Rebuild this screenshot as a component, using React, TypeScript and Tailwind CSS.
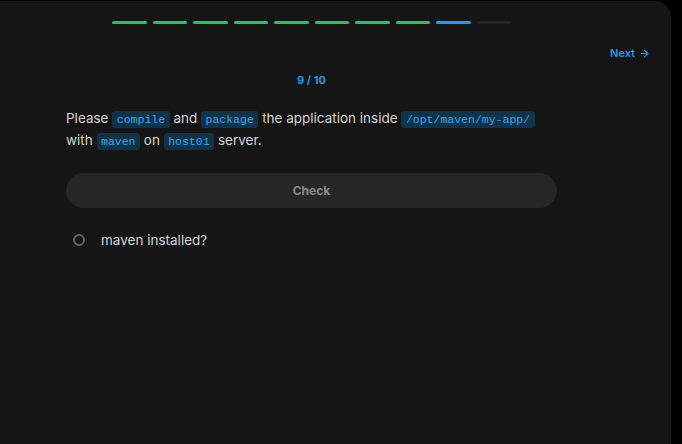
import React from "react";

const Code = ({ children }: { children: React.ReactNode }) => (
  <code className="rounded-[3px] bg-[#0f3349] px-[4.5px] py-[2px] text-[11.5px] leading-[14px] text-[#3ea6f0] [font-family:'Liberation_Mono',monospace]">
    {children}
  </code>
);

export default function App() {
  const bars = ["g", "g", "g", "g", "g", "g", "g", "g", "b", "x"];
  return (
    <div className="h-[444px] w-[682px] overflow-hidden bg-black [font-family:Inter,'Noto_Sans',sans-serif]">
      <div className="mt-px flex h-[443px] w-[671px] flex-col rounded-tr-[16px] bg-[#151515]">
        <div className="flex w-[623px] justify-center gap-[6px] pt-[20px]">
          {bars.map((b, i) => (
            <div
              key={i}
              className={
                "h-[3px] w-[34.5px] rounded-full " +
                (b === "g" ? "bg-[#22c55e]" : b === "b" ? "bg-[#1d9bf0]" : "bg-[#262626]")
              }
            />
          ))}
        </div>
        <div className="flex justify-end pr-[21px] pt-[21px]">
          <button className="flex items-center gap-[4px] text-[11px] font-semibold text-[#1d9bf0]">
            Next
            <svg width="11" height="11" viewBox="0 0 24 24" fill="none" stroke="currentColor" strokeWidth="2.6" strokeLinecap="round" strokeLinejoin="round">
              <path d="M5 12h14" />
              <path d="m12 5 7 7-7 7" />
            </svg>
          </button>
        </div>
        <div className="ml-[66px] w-[491px]">
          <div className="pt-[10px] text-center text-[11px] font-bold text-[#1d9bf0]">9 / 10</div>
          <p className="mt-[19px] text-[13.5px] leading-[22px] text-[#d4d4d4]">
            Please <Code>compile</Code> and <Code>package</Code> the application inside{" "}
            <Code>/opt/maven/my-app/</Code> with <Code>maven</Code> on <Code>host01</Code> server.
          </p>
          <button className="mt-[22px] flex h-[35px] w-full items-center justify-center rounded-full bg-[#262626] text-[12px] font-bold text-[#8a8a8a]">
            Check
          </button>
          <div className="mt-[22px] flex items-center">
            <div className="ml-[7px] h-[12px] w-[12px] rounded-full border-2 border-[#666666]" />
            <span className="ml-[16px] text-[13.5px] text-[#d4d4d4]">maven installed?</span>
          </div>
        </div>
      </div>
    </div>
  );
}
